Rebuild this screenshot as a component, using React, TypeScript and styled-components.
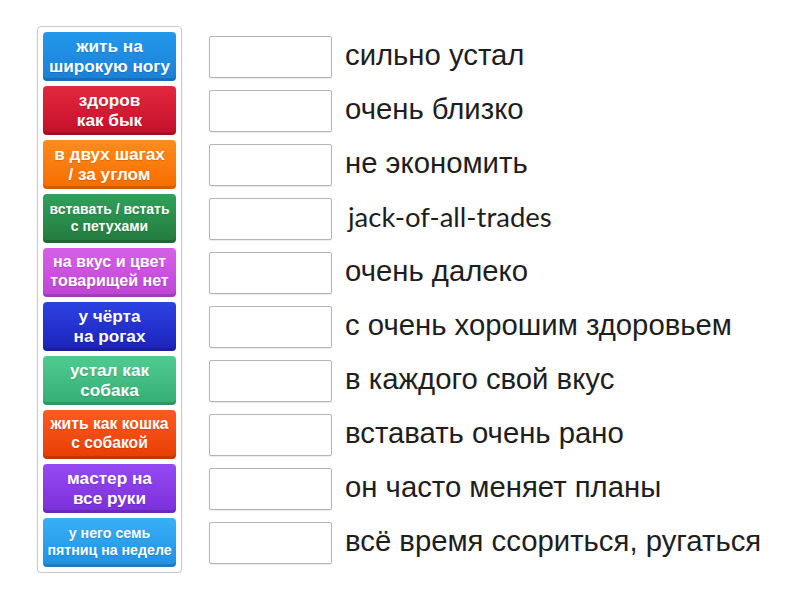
import styled, { createGlobalStyle } from "styled-components";

const GlobalStyle = createGlobalStyle`
  html, body {
    margin: 0;
    padding: 0;
    background: #ffffff;
  }
  body {
    font-family: "Liberation Sans", Arial, sans-serif;
  }
`;

type Tile = { text: string[]; top: string; bottom: string; size: number };

const tiles: Tile[] = [
  { text: ["жить на", "широкую ногу"], top: "#2399ec", bottom: "#1b7fd6", size: 17.2 },
  { text: ["здоров", "как бык"], top: "#e2283d", bottom: "#c40f2b", size: 17.2 },
  { text: ["в двух шагах", "/ за углом"], top: "#ff8c1c", bottom: "#f56c00", size: 17.2 },
  { text: ["вставать / встать", "с петухами"], top: "#31a05a", bottom: "#227a3e", size: 14 },
  { text: ["на вкус и цвет", "товарищей нет"], top: "#d760ea", bottom: "#bd44d4", size: 16 },
  { text: ["у чёрта", "на рогах"], top: "#2d42e2", bottom: "#1b22b9", size: 17.2 },
  { text: ["устал как", "собака"], top: "#4fcb92", bottom: "#35ad74", size: 17.2 },
  { text: ["жить как кошка", "с собакой"], top: "#ff5b22", bottom: "#e63d02", size: 15.7 },
  { text: ["мастер на", "все руки"], top: "#9449f2", bottom: "#7a2fd8", size: 17.2 },
  { text: ["у него семь", "пятниц на неделе"], top: "#38b0f6", bottom: "#1f90e2", size: 14.2 },
];

const answers = [
  "сильно устал",
  "очень близко",
  "не экономить",
  "jack-of-all-trades",
  "очень далеко",
  "с очень хорошим здоровьем",
  "в каждого свой вкус",
  "вставать очень рано",
  "он часто меняет планы",
  "всё время ссориться, ругаться",
];

export default function App() {
  return (
    <>
      <GlobalStyle />
      <Page>
        <Panel>
          {tiles.map((t) => (
            <TileButton key={t.text.join(" ")} $top={t.top} $bottom={t.bottom} $size={t.size}>
              {t.text.map((line) => (
                <span key={line}>{line}</span>
              ))}
            </TileButton>
          ))}
        </Panel>
        <Answers>
          {answers.map((a) => (
            <Row key={a}>
              <DropBox />
              <Label $latin={/^[a-z]/.test(a)}>{a}</Label>
            </Row>
          ))}
        </Answers>
      </Page>
    </>
  );
}

const Page = styled.div`
  display: flex;
  align-items: flex-start;
  gap: 27px;
  padding: 26px 0 0 37px;
`;

const Panel = styled.div`
  display: flex;
  flex-direction: column;
  gap: 5px;
  padding: 5px;
  border: 1px solid #c9c9c9;
  border-radius: 4px;
  box-shadow: 0 1px 2px rgba(0, 0, 0, 0.12);
`;

const TileButton = styled.div<{ $top: string; $bottom: string; $size: number }>`
  width: 133px;
  height: 49px;
  box-sizing: border-box;
  display: flex;
  flex-direction: column;
  align-items: center;
  justify-content: center;
  padding-bottom: 1px;
  border-radius: 4px;
  background: linear-gradient(${(p) => p.$top}, ${(p) => p.$bottom});
  box-shadow: inset 0 -3px 0 rgba(0, 0, 0, 0.14);
  color: #ffffff;
  font-family: "Liberation Sans", Arial, sans-serif;
  font-weight: bold;
  font-size: ${(p) => p.$size}px;
  line-height: 1.18;
  text-align: center;
  white-space: nowrap;
  text-shadow: 0 1px 1px rgba(0, 0, 0, 0.15);
`;

const Answers = styled.div`
  display: flex;
  flex-direction: column;
  gap: 5px;
  padding-top: 6px;
`;

const Row = styled.div`
  display: flex;
  align-items: center;
  gap: 13px;
  height: 49px;
`;

const DropBox = styled.div`
  width: 123px;
  height: 42px;
  flex-shrink: 0;
  box-sizing: border-box;
  border: 1px solid #b4b4b4;
  border-radius: 2px;
  background: #ffffff;
  box-shadow: 0 1px 1px rgba(0, 0, 0, 0.08);
`;

const Label = styled.span<{ $latin: boolean }>`
  font-family: ${(p) => (p.$latin ? "Lato, " : "")}"Liberation Sans", Arial, sans-serif;
  font-size: ${(p) => (p.$latin ? "27.5px" : "29.3px")};
  color: #1e1e1e;
  padding-left: ${(p) => (p.$latin ? "3px" : "0")};
  padding-bottom: 4px;
  white-space: nowrap;
`;
